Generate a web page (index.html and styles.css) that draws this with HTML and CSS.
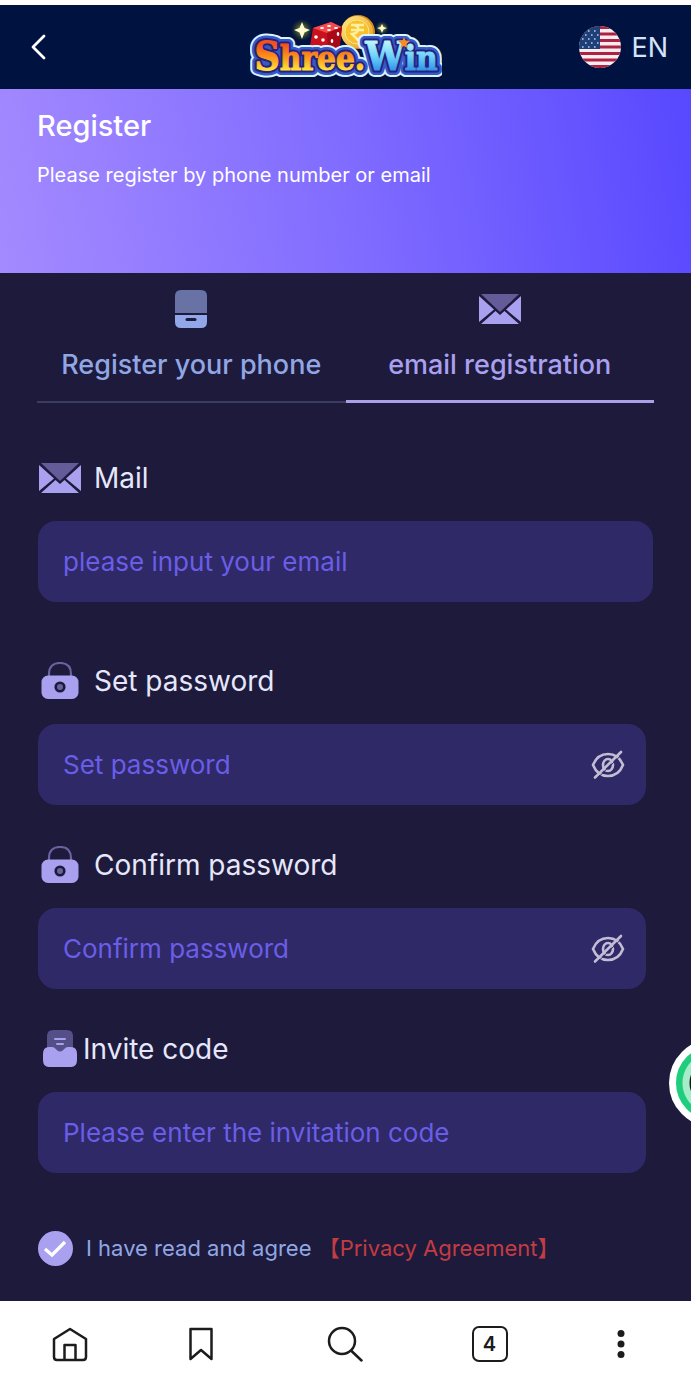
FILE: index.html
```html
<!DOCTYPE html>
<html lang="en">
<head>
    <meta charset="UTF-8">
    <meta name="viewport" content="width=device-width, initial-scale=1.0">
    <title>Register - Shree.Win</title>
    <link rel="stylesheet" href="styles.css">
</head>
<body>
    <!-- shared icons -->
    <svg class="sprite" aria-hidden="true">
        <symbol id="icon-mail" viewBox="0 0 42 30">
            <path d="M2 0H40L21 18Z" fill="#645c98"/>
            <path d="M0 2L15 15.500L0 28ZM42 2L27 15.500L42 28Z" fill="#a9a0ef"/>
            <path d="M2 30L16.500 17L21 21L25.500 17L40 30Z" fill="#a9a0ef"/>
        </symbol>
        <symbol id="icon-lock" viewBox="0 0 38 38">
            <path d="M8 14V12C8 5 12 1 19 1S30 5 30 12V14" fill="none" stroke="#6a629f" stroke-width="2.200"/>
            <rect x="0.500" y="13.500" width="37" height="23.500" rx="6.500" fill="#a9a0ef"/>
            <circle cx="19" cy="25" r="4.300" fill="#6a629f" stroke="#1d1a3c" stroke-width="2.600"/>
        </symbol>
        <symbol id="icon-eye" viewBox="0 0 34 30">
            <g fill="none" stroke="#c0bdd4" stroke-width="2.600" stroke-linecap="round">
                <path d="M2 15C5 7.500 10 4 17 4S29 7.500 32 15C29 22.500 24 26 17 26S5 22.500 2 15Z"/>
                <ellipse cx="17" cy="15" rx="5" ry="6"/>
                <path d="M4 27.500L30 2"/>
            </g>
            <path d="M6 28.500L31 4.500" stroke="#2f2967" stroke-width="1"/>
        </symbol>
    </svg>

    <div class="page">
        <header class="header">
            <button class="back" type="button" aria-label="Back">
                <svg width="16" height="26" viewBox="0 0 16 26"><path d="M14 2L3 13L14 24" fill="none" stroke="#fff" stroke-width="2.800" stroke-linecap="round" stroke-linejoin="round"/></svg>
            </button>
            <a class="logo" href="#" aria-label="Shree.Win">
                <svg width="192" height="68" viewBox="0 0 192 68">
                    <defs>
                        <linearGradient id="warm" x1="0" y1="0" x2="0" y2="1">
                            <stop offset="0.250" stop-color="#f4511c"/>
                            <stop offset="0.550" stop-color="#fb9a1c"/>
                            <stop offset="0.800" stop-color="#ffe23a"/>
                        </linearGradient>
                        <linearGradient id="cool" x1="0" y1="0" x2="0" y2="1">
                            <stop offset="0.200" stop-color="#b5f3ff"/>
                            <stop offset="0.500" stop-color="#6fd3fa"/>
                            <stop offset="0.850" stop-color="#2b8ce8"/>
                        </linearGradient>
                        <linearGradient id="gold" x1="0" y1="0" x2="1" y2="1">
                            <stop offset="0" stop-color="#ffe98a"/>
                            <stop offset="1" stop-color="#e99a16"/>
                        </linearGradient>
                        <radialGradient id="glow">
                            <stop offset="0" stop-color="#d8dc3c" stop-opacity="0.800"/>
                            <stop offset="1" stop-color="#5c6a10" stop-opacity="0"/>
                        </radialGradient>
                        <text id="logo-word" class="logo-word" x="96" y="57" text-anchor="middle"><tspan class="warm big">S</tspan><tspan class="warm">hree.</tspan><tspan class="cool big">W</tspan><tspan class="cool">in</tspan></text>
                    </defs>
                    <g transform="translate(2 -3)">
                        <circle cx="50" cy="20" r="11" fill="url(#glow)"/>
                        <path d="M50 12L52.500 18L58 20L52.500 22.500L50 29L47.500 22.500L42 20L47.500 18Z" fill="#fffbd0"/>
                        <circle cx="130" cy="18" r="7" fill="url(#glow)"/>
                        <path d="M130 14L131.500 17L135 18L131.500 19.500L130 23L128.500 19.500L125 18L128.500 17Z" fill="#fffbd0"/>
                        <circle cx="106" cy="22" r="17" fill="#d98a12"/>
                        <circle cx="105" cy="22" r="16" fill="url(#gold)"/>
                        <circle cx="105" cy="22" r="12" fill="#f7c02c" stroke="#ffe680"/>
                        <path d="M99 15H112M99 20H112M100 15C108 14 109 23 100 24L108 32" fill="none" stroke="#fff0a0" stroke-width="2.500"/>
                        <path d="M61 18L79 12L90 18L87 42L63 42L58 36Z" fill="#c9101d"/>
                        <path d="M61 18L79 12L90 17L75 23Z" fill="#f44a4b"/>
                        <path d="M75 23L90 17L87 38L76 42Z" fill="#a90817"/>
                        <g fill="#fff">
                            <ellipse cx="70" cy="18" rx="2" ry="1"/>
                            <ellipse cx="77" cy="16" rx="2" ry="1"/>
                            <ellipse cx="77" cy="20" rx="2" ry="1"/>
                            <ellipse cx="84" cy="18" rx="2" ry="1"/>
                            <circle cx="64" cy="27" r="1.800"/>
                            <circle cx="71" cy="30" r="1.800"/>
                            <ellipse cx="86" cy="24" rx="1.300" ry="2"/>
                            <ellipse cx="80" cy="31" rx="1.300" ry="2"/>
                        </g>
                    </g>
                    <use class="logo-edge" href="#logo-word"/>
                    <use class="logo-rim" href="#logo-word"/>
                    <use class="logo-shade" href="#logo-word"/>
                    <use class="logo-fill" href="#logo-word"/>
                    <path d="M154 24L155.500 27.500L160 28L156.500 31L157.500 35L154 33L150.500 35L151.500 31L148 28L152.500 27.500Z" fill="#ff8a1c"/>
                </svg>
            </a>
            <button class="language" type="button">
                <svg width="42" height="42" viewBox="0 0 42 42">
                    <defs><clipPath id="round"><circle cx="21" cy="21" r="21"/></clipPath></defs>
                    <g clip-path="url(#round)">
                        <rect width="42" height="42" fill="#f6edf2"/>
                        <path d="M0 1.500H42M0 8H42M0 14.500H42M0 21H42M0 27.500H42M0 34H42M0 40.500H42" stroke="#ad2240" stroke-width="3.200"/>
                        <rect width="21" height="23" fill="#1e3f78"/>
                        <path d="M3 5H21M6 9H21M3 13H21M6 17H21M3 21H21" stroke="#b9cbe8" stroke-width="1.600" stroke-dasharray="1.600 4.400"/>
                    </g>
                </svg>
                <span>EN</span>
            </button>
        </header>

        <section class="hero">
            <h1>Register</h1>
            <p>Please register by phone number or email</p>
        </section>

        <main class="content">
            <nav class="tabs">
                <a class="tab" href="#">
                    <svg width="32" height="38" viewBox="0 0 32 38">
                        <path d="M0 23V6Q0 0 6 0H26Q32 0 32 6V23Z" fill="#6972a5"/>
                        <path d="M0 25H32V32Q32 38 26 38H6Q0 38 0 32Z" fill="#91a7ea"/>
                        <path d="M12 29.500H20" stroke="#1d1a3c" stroke-width="3" stroke-linecap="round"/>
                    </svg>
                    <span>Register your phone</span>
                </a>
                <a class="tab active" href="#" aria-current="page">
                    <svg width="42" height="38" viewBox="0 0 42 38"><use href="#icon-mail" y="4" width="42" height="30"/></svg>
                    <span>email registration</span>
                </a>
            </nav>

            <form class="form">
                <div class="field field-mail">
                    <label for="mail"><svg width="42" height="30"><use href="#icon-mail"/></svg>Mail</label>
                    <div class="input-box">
                        <input type="email" id="mail" placeholder="please input your email">
                    </div>
                </div>

                <div class="field">
                    <label for="password"><svg width="42" height="38"><use href="#icon-lock"/></svg>Set password</label>
                    <div class="input-box">
                        <input type="password" id="password" placeholder="Set password">
                        <button class="eye" type="button" aria-label="Show password"><svg width="34" height="30"><use href="#icon-eye"/></svg></button>
                    </div>
                </div>

                <div class="field">
                    <label for="confirm"><svg width="42" height="38"><use href="#icon-lock"/></svg>Confirm password</label>
                    <div class="input-box">
                        <input type="password" id="confirm" placeholder="Confirm password">
                        <button class="eye" type="button" aria-label="Show password"><svg width="34" height="30"><use href="#icon-eye"/></svg></button>
                    </div>
                </div>

                <div class="field field-invite">
                    <label for="invite">
                        <svg width="42" height="38" viewBox="0 0 42 38">
                            <path d="M8 22V6Q8 0 14 0H28Q34 0 34 6V22Z" fill="#554f87"/>
                            <path d="M16 9H26M18 14H24" stroke="#a9a0ef" stroke-width="2" stroke-linecap="round"/>
                            <path d="M4 24Q4 17 10 17H13C17 17 17 21.500 21 21.500S25 17 29 17H32Q38 17 38 24V30Q38 37 32 37H10Q4 37 4 30Z" fill="#a9a0ef"/>
                        </svg>Invite code</label>
                    <div class="input-box">
                        <input type="text" id="invite" placeholder="Please enter the invitation code">
                    </div>
                </div>

                <div class="agree">
                    <input type="checkbox" id="agree" checked>
                    <p><label for="agree">I have read and agree</label> <a href="#">【Privacy Agreement】</a></p>
                </div>
            </form>
        </main>

        <nav class="browser-bar">
            <button type="button" aria-label="Home">
                <svg width="36" height="36" viewBox="0 0 36 36"><path d="M2 13L18 3L34 13V31Q34 34 31 34H5Q2 34 2 31ZM12.500 34V19H23.500V34" /></svg>
            </button>
            <button type="button" aria-label="Bookmarks">
                <svg width="36" height="36" viewBox="0 0 36 36"><path d="M7.500 3H28.500V33L18 24L7.500 33Z"/></svg>
            </button>
            <button type="button" aria-label="Search">
                <svg width="36" height="36" viewBox="0 0 36 36"><circle cx="15" cy="15" r="13"/><path d="M24.500 25L34.500 34.500"/></svg>
            </button>
            <button type="button" aria-label="Open tabs">
                <span class="tab-count">4</span>
            </button>
            <button type="button" aria-label="Menu">
                <svg class="dots" width="36" height="36" viewBox="0 0 36 36"><circle cx="18" cy="7.500" r="3.500"/><circle cx="18" cy="18" r="3.500"/><circle cx="18" cy="28.500" r="3.500"/></svg>
            </button>
        </nav>

        <button class="float-button" type="button" aria-label="Support"></button>
    </div>
</body>
</html>
```

FILE: styles.css
```css
* {
    box-sizing: border-box;
}
body {
    margin: 0;
    background-color: #1d1a3c;
    font-family: Inter, "Noto Sans CJK SC", sans-serif;
    color: #e6e7fb;
}
button {
    padding: 0;
    border: none;
    background: none;
    color: inherit;
    font-family: inherit;
    cursor: pointer;
}
a {
    text-decoration: none;
}
svg {
    display: block;
    flex-shrink: 0;
}
.sprite {
    display: block;
    position: absolute;
    width: 0;
    height: 0;
}
.page {
    position: relative;
    display: flex;
    flex-direction: column;
    min-height: 100vh;
    overflow: hidden;
}

/* header */
.header {
    display: grid;
    grid-template-columns: 1fr auto 1fr;
    align-items: center;
    height: 89px;
    padding: 0 23px;
    border-top: 5px solid #fff;
    background-color: #001240;
}
.back {
    justify-self: start;
    padding-left: 7px;
}
.language {
    justify-self: end;
    display: flex;
    align-items: center;
    gap: 10px;
    font-size: 27px;
    color: #d5e3fa;
}
.logo-word {
    font-family: "DejaVu Serif Condensed", "DejaVu Serif", serif;
    font-size: 33px;
    font-weight: bold;
    stroke-linejoin: round;
}
.logo-word .big {
    font-size: 39px;
}
.logo-word .warm {
    fill: var(--warm);
    stroke: var(--warm);
}
.logo-word .cool {
    fill: var(--cool);
    stroke: var(--cool);
}
.logo-edge {
    --warm: #d9f3ff;
    --cool: #d9f3ff;
    stroke-width: 14px;
}
.logo-rim {
    --warm: #3559c7;
    --cool: #3559c7;
    stroke-width: 10px;
}
.logo-shade {
    --warm: #26227c;
    --cool: #26227c;
    stroke-width: 5px;
}
.logo-fill {
    --warm: url(#warm);
    --cool: url(#cool);
    stroke-width: 1px;
}

/* title banner */
.hero {
    height: 184px;
    padding: 18px 37px;
    background: linear-gradient(80deg, #a48aff 0%, #806cff 50%, #5848ff 100%);
    color: #fff;
}
.hero h1 {
    margin: 0;
    font-size: 29px;
    font-weight: 500;
    line-height: 38px;
}
.hero p {
    margin: 16px 0 0;
    font-size: 20px;
    line-height: 28px;
}

.content {
    flex: 1;
    padding: 0 37px;
}

/* tabs */
.tabs {
    display: grid;
    grid-template-columns: 1fr 1fr;
}
.tab {
    display: flex;
    flex-direction: column;
    align-items: center;
    gap: 18px;
    height: 130px;
    padding-top: 17px;
    border-bottom: 2px solid #3c3b60;
    color: #91a7e4;
    font-size: 27px;
    font-weight: 500;
    line-height: 38px;
    white-space: nowrap;
}
.tab.active {
    border-bottom: 3px solid #a9a0e8;
    color: #a9a0ef;
}

/* form */
.form {
    padding: 55px 8px 0 1px;
}
.field {
    margin-bottom: 40px;
}
.field label {
    display: flex;
    align-items: center;
    gap: 13px;
    height: 40px;
    margin-bottom: 23px;
    padding-left: 1px;
    font-size: 28px;
}
.field-mail {
    margin-right: -7px;
    margin-bottom: 59px;
}
.field-invite label {
    gap: 2px;
}
.input-box {
    display: flex;
    align-items: center;
    height: 81px;
    padding: 0 21px 0 25px;
    border-radius: 18px;
    background-color: #2f2967;
}
.input-box input {
    flex: 1;
    min-width: 0;
    height: 100%;
    padding: 0;
    border: none;
    outline: none;
    background: none;
    color: #e6e7fb;
    font-family: inherit;
    font-size: 26px;
}
.input-box input::placeholder {
    color: #6a5ee8;
    opacity: 1;
}

.agree {
    display: flex;
    align-items: center;
    height: 36px;
    margin-top: 57px;
    font-size: 22px;
    line-height: 36px;
    color: #91a7e4;
    white-space: nowrap;
}
.agree p {
    margin: 0;
}
.agree input {
    appearance: none;
    width: 35px;
    height: 35px;
    margin: 0 13px 0 0;
    border-radius: 50%;
    background-color: #4d487c;
}
.agree input:checked {
    background: #a9a0ef url("data:image/svg+xml,%3Csvg xmlns='http://www.w3.org/2000/svg' viewBox='0 0 35 35'%3E%3Cpath d='M7 18L14 24L27 11' fill='none' stroke='white' stroke-width='3.200'/%3E%3C/svg%3E") center / 35px 35px;
}
.agree a {
    color: #c33c43;
}

/* bottom browser bar */
.browser-bar {
    display: grid;
    grid-template-columns: 140fr 121fr 168fr 121fr 141fr;
    height: 85px;
    background-color: #fff;
}
.browser-bar button {
    display: flex;
    align-items: center;
    justify-content: center;
    color: #1c1c1c;
}
.browser-bar svg {
    fill: none;
    stroke: #1c1c1c;
    stroke-width: 2.5px;
    stroke-linejoin: round;
    stroke-linecap: round;
}
.browser-bar .dots {
    fill: #1c1c1c;
    stroke: none;
}
.tab-count {
    width: 36px;
    height: 36px;
    border: 2px solid #1c1c1c;
    border-radius: 7px;
    font-size: 20px;
    font-weight: 600;
    line-height: 32px;
}

/* floating support button */
.float-button {
    position: absolute;
    right: -66px;
    bottom: 259px;
    width: 88px;
    height: 88px;
    border: 7px solid #fff;
    border-radius: 50%;
    background: radial-gradient(circle, #101c1c 0 23px, #a5ecc8 24px 30px, #1fce7c 31px);
}
```
